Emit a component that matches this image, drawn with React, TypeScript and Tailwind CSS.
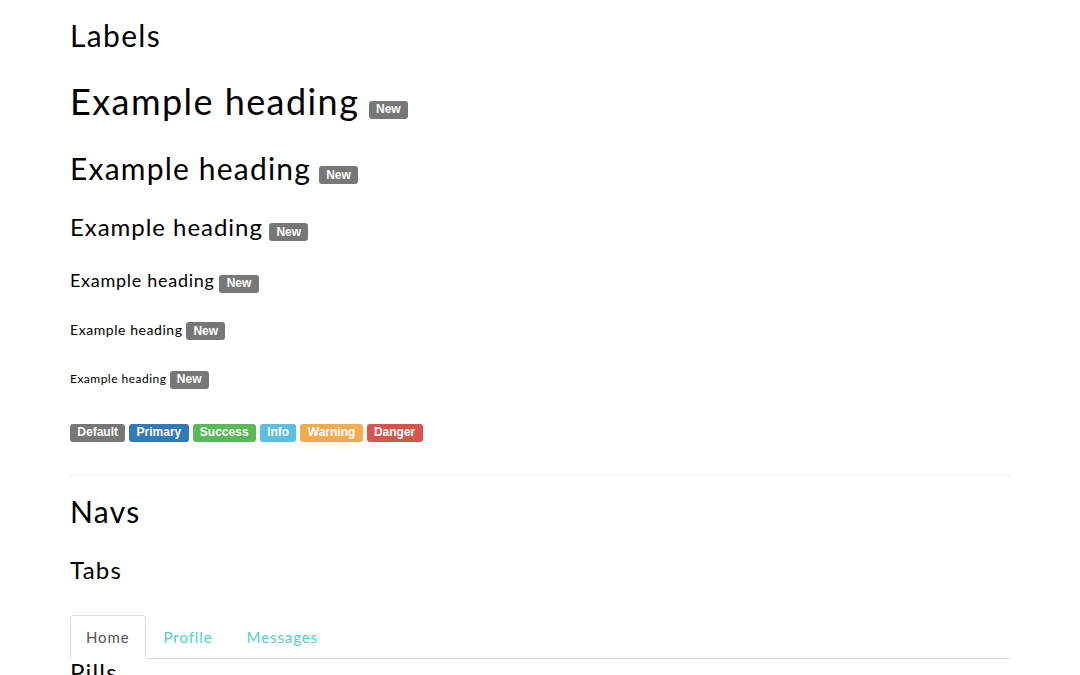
import React from "react";

type Tone = "default" | "primary" | "success" | "info" | "warning" | "danger";

const toneClass: Record<Tone, string> = {
  default: "bg-[#777777]",
  primary: "bg-[#337ab7]",
  success: "bg-[#5cb85c]",
  info: "bg-[#5bc0de]",
  warning: "bg-[#f0ad4e]",
  danger: "bg-[#d9534f]",
};

function Label({ tone = "default", lift = "", children }: { tone?: Tone; lift?: string; children: React.ReactNode }) {
  return (
    <span
      className={`relative inline-block rounded-[3px] px-[7.3px] pt-[2.4px] pb-[3.6px] font-['Liberation_Sans',Arial,sans-serif] text-[12px] font-bold leading-none tracking-normal text-white ${toneClass[tone]} ${lift}`}
    >
      {children}
    </span>
  );
}

const headings = [
  { size: "text-[36px]", mt: "mt-[30px]", h: "h-[39.6px]", lift: "-top-[2px]" },
  { size: "text-[30px]", mt: "mt-[30px]", h: "h-[33px]", lift: "-top-[1px]" },
  { size: "text-[24px]", mt: "mt-[29px]", h: "h-[26.4px]", lift: "" },
  { size: "text-[18px]", mt: "mt-[31px]", h: "h-[19.8px]", lift: "" },
  { size: "text-[14px]", mt: "mt-[31px]", h: "h-[15.4px]", lift: "" },
  { size: "text-[12px]", mt: "mt-[33.5px]", h: "h-[13.2px]", lift: "" },
];

export default function App() {
  return (
    <div className="h-[675px] overflow-hidden bg-white font-['Lato','Open_Sans',sans-serif] text-[#000]">
      <div className="mx-auto w-[970px] px-[15px] pt-[19px]">
        {/* Labels section */}
        <h1 className="text-[30px] font-normal leading-[1.1] tracking-[0.045em]">Labels</h1>

        {headings.map((hd, i) => (
          <div
            key={i}
            className={`flex items-baseline gap-[0.26em] leading-[1.1] tracking-[0.04em] ${hd.size} ${hd.mt} ${hd.h}`}
          >
            <span>Example heading</span>
            <Label lift={hd.lift}>New</Label>
          </div>
        ))}

        <div className="mt-[40px] flex gap-[4px]">
          <Label>Default</Label>
          <Label tone="primary">Primary</Label>
          <Label tone="success">Success</Label>
          <Label tone="info">Info</Label>
          <Label tone="warning">Warning</Label>
          <Label tone="danger">Danger</Label>
        </div>

        <hr className="mt-[33px] border-0 border-t border-[#eeeeee]" />

        {/* Navs section */}
        <h1 className="mt-[19px] text-[30px] font-normal leading-[1.1] tracking-[0.045em]">Navs</h1>
        <h2 className="mt-[29.6px] text-[24px] font-normal leading-[1.1] tracking-[0.05em]">Tabs</h2>

        <ul className="mt-[31px] flex border-b border-[#dddddd] text-[15px] leading-[22px] tracking-[0.06em]">
          <li className="-mb-px mr-[2px]">
            <a className="block rounded-t-[4px] border border-[#dddddd] border-b-transparent bg-white px-[15px] py-[10px] text-[#555555]">
              Home
            </a>
          </li>
          <li className="-mb-px mr-[2px]">
            <a className="block border border-transparent px-[15px] py-[10px] text-[#4fd1c5]">Profile</a>
          </li>
          <li className="-mb-px mr-[2px]">
            <a className="block border border-transparent px-[15px] py-[10px] text-[#4fd1c5]">Messages</a>
          </li>
        </ul>

        <h2 className="text-[24px] font-normal leading-[1.1] tracking-[0.05em]">Pills</h2>
      </div>
    </div>
  );
}
